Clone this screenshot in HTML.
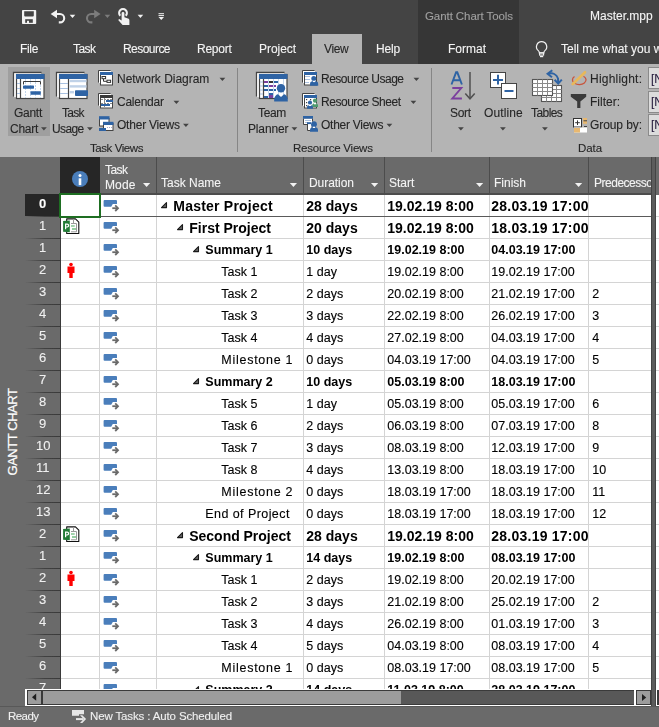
<!DOCTYPE html>
<html><head><meta charset="utf-8"><style>
html,body{margin:0;padding:0;}
body{width:659px;height:727px;position:relative;overflow:hidden;background:#444;font-family:"Liberation Sans",sans-serif;}
div,span{position:absolute;}
.t{white-space:nowrap;line-height:1;}
.g{will-change:transform;-webkit-text-stroke:0.1px currentColor;}
</style></head><body>
<div style="left:0px;top:0px;width:659px;height:64px;background:#444444;"></div>
<div style="left:418px;top:0px;width:101px;height:64px;background:#363636;"></div>
<span class="t g" style="left:425.30px;top:11px;font-size:11.5px;color:#a0a0a0;letter-spacing:-0.075px;">Gantt Chart Tools</span>
<span class="t g" style="left:590.30px;top:10px;font-size:12px;color:#f4f4f4;letter-spacing:-0.009px;">Master.mpp</span>
<div style="left:312px;top:34px;width:50px;height:30px;background:#b4b4b4;"></div>
<span class="t g" style="left:19.80px;top:43px;font-size:12px;color:#f4f4f4;letter-spacing:-0.334px;">File</span>
<span class="t g" style="left:72.80px;top:43px;font-size:12px;color:#f4f4f4;letter-spacing:-0.543px;">Task</span>
<span class="t g" style="left:122.80px;top:43px;font-size:12px;color:#f4f4f4;letter-spacing:-0.545px;">Resource</span>
<span class="t g" style="left:197.30px;top:43px;font-size:12px;color:#f4f4f4;letter-spacing:-0.253px;">Report</span>
<span class="t g" style="left:258.80px;top:43px;font-size:12px;color:#f4f4f4;letter-spacing:-0.050px;">Project</span>
<span class="t g" style="left:375.80px;top:43px;font-size:12px;color:#f4f4f4;letter-spacing:-0.170px;">Help</span>
<span class="t g" style="left:448.30px;top:43px;font-size:12px;color:#f4f4f4;letter-spacing:-0.001px;">Format</span>
<span class="t g" style="left:323.90px;top:43px;font-size:12px;color:#262626;letter-spacing:-0.398px;">View</span>
<span class="t g" style="left:561.30px;top:43px;font-size:12px;color:#f4f4f4;">Tell me what you want to do</span>
<div style="left:0px;top:64px;width:659px;height:93px;background:#b4b4b4;"></div>
<div style="left:8px;top:67px;width:42px;height:69px;background:#9f9f9f;"></div>
<div style="left:237px;top:68px;width:1px;height:84px;background:#868686;"></div>
<div style="left:431px;top:68px;width:1px;height:84px;background:#868686;"></div>
<span class="t g" style="left:14.30px;top:107px;font-size:12px;color:#262626;letter-spacing:-0.270px;">Gantt</span>
<span class="t g" style="left:10.30px;top:123px;font-size:12px;color:#262626;letter-spacing:-0.269px;">Chart</span>
<span class="t g" style="left:61.80px;top:107px;font-size:12px;color:#262626;letter-spacing:-0.743px;">Task</span>
<span class="t g" style="left:51.80px;top:123px;font-size:12px;color:#262626;letter-spacing:-0.638px;">Usage</span>
<span class="t g" style="left:116.80px;top:73px;font-size:12px;color:#262626;letter-spacing:-0.026px;">Network Diagram</span>
<span class="t g" style="left:116.80px;top:96px;font-size:12px;color:#262626;letter-spacing:-0.250px;">Calendar</span>
<span class="t g" style="left:116.80px;top:119px;font-size:12px;color:#262626;letter-spacing:-0.222px;">Other Views</span>
<span class="t g" style="left:90.30px;top:143px;font-size:11.5px;color:#262626;letter-spacing:-0.431px;">Task Views</span>
<span class="t g" style="left:258.00px;top:107px;font-size:12px;color:#262626;letter-spacing:-0.336px;">Team</span>
<span class="t g" style="left:248.00px;top:123px;font-size:12px;color:#262626;letter-spacing:-0.152px;">Planner</span>
<span class="t g" style="left:320.80px;top:73px;font-size:12px;color:#262626;letter-spacing:-0.491px;">Resource Usage</span>
<span class="t g" style="left:320.80px;top:96px;font-size:12px;color:#262626;letter-spacing:-0.468px;">Resource Sheet</span>
<span class="t g" style="left:320.80px;top:119px;font-size:12px;color:#262626;letter-spacing:-0.267px;">Other Views</span>
<span class="t g" style="left:293.30px;top:143px;font-size:11.5px;color:#262626;letter-spacing:-0.227px;">Resource Views</span>
<span class="t g" style="left:449.60px;top:107px;font-size:12px;color:#262626;letter-spacing:-0.302px;">Sort</span>
<span class="t g" style="left:483.80px;top:107px;font-size:12px;color:#262626;letter-spacing:0.097px;">Outline</span>
<span class="t g" style="left:530.90px;top:107px;font-size:12px;color:#262626;letter-spacing:-0.565px;">Tables</span>
<span class="t g" style="left:589.60px;top:73px;font-size:12px;color:#262626;letter-spacing:0.217px;">Highlight:</span>
<span class="t g" style="left:589.60px;top:96px;font-size:12px;color:#262626;letter-spacing:-0.000px;">Filter:</span>
<span class="t g" style="left:589.60px;top:119px;font-size:12px;color:#262626;letter-spacing:-0.077px;">Group by:</span>
<div style="left:648px;top:67px;width:20px;height:22px;background:#dcdcdc;border:1px solid #8a8a8a;box-sizing:border-box;"></div>
<div style="left:648px;top:91px;width:20px;height:22px;background:#dcdcdc;border:1px solid #8a8a8a;box-sizing:border-box;"></div>
<div style="left:648px;top:114px;width:20px;height:22px;background:#dcdcdc;border:1px solid #8a8a8a;box-sizing:border-box;"></div>
<span class="t g" style="left:651.30px;top:73px;font-size:12px;color:#2a2040;">[No</span>
<span class="t g" style="left:651.30px;top:96px;font-size:12px;color:#2a2040;">[No</span>
<span class="t g" style="left:651.30px;top:119px;font-size:12px;color:#2a2040;">[No</span>
<span class="t g" style="left:578.00px;top:143px;font-size:11.5px;color:#262626;letter-spacing:-0.073px;">Data</span>
<div style="left:0px;top:157px;width:659px;height:549px;background:#6a6a6a;"></div>
<div class="t" style="left:-39px;top:425px;width:104px;height:14px;line-height:14px;text-align:center;font-size:13px;color:#ffffff;transform:rotate(-90deg);letter-spacing:-0.45px;-webkit-text-stroke:0.2px #fff">GANTT CHART</div>
<div style="left:60px;top:157px;width:40px;height:36px;background:#262626;"></div>
<div style="left:156px;top:157px;width:1px;height:36px;background:#4c4c4c;"></div>
<div style="left:303px;top:157px;width:1px;height:36px;background:#4c4c4c;"></div>
<div style="left:384px;top:157px;width:1px;height:36px;background:#4c4c4c;"></div>
<div style="left:489px;top:157px;width:1px;height:36px;background:#4c4c4c;"></div>
<div style="left:588px;top:157px;width:1px;height:36px;background:#4c4c4c;"></div>
<div style="left:100px;top:193px;width:551px;height:2px;background:#4c4c4c;"></div>
<span class="t g" style="left:105.30px;top:164px;font-size:12px;color:#f4f4f4;letter-spacing:-0.543px;">Task</span>
<span class="t g" style="left:105.30px;top:179px;font-size:12px;color:#f4f4f4;letter-spacing:0.121px;">Mode</span>
<span class="t g" style="left:161.30px;top:177px;font-size:12px;color:#f4f4f4;">Task Name</span>
<span class="t g" style="left:309.00px;top:177px;font-size:12px;color:#f4f4f4;letter-spacing:-0.045px;">Duration</span>
<span class="t g" style="left:389.30px;top:177px;font-size:12px;color:#f4f4f4;">Start</span>
<span class="t g" style="left:494.30px;top:177px;font-size:12px;color:#f4f4f4;">Finish</span>
<div style="left:589px;top:157px;width:62px;height:36px;overflow:hidden">
<span class="t g" style="left:4.90px;top:20px;font-size:12px;color:#f4f4f4;letter-spacing:-0.489px;">Predecessors</span>
</div>
<div style="left:61px;top:195px;width:590px;height:494px;background:#ffffff;"></div>
<div style="left:656px;top:195px;width:3px;height:494px;background:#ffffff;"></div>
<div style="left:60px;top:195px;width:1px;height:494px;background:#3a3a3a;"></div>
<div style="left:0;top:0;width:659px;height:689px;overflow:hidden">
<div style="left:61px;top:216px;width:590px;height:1px;background:#5a5a5a;"></div>
<div style="left:656px;top:216px;width:3px;height:1px;background:#d4d4d4;"></div>
<div style="left:156px;top:195px;width:1px;height:21px;background:#d4d4d4;"></div>
<div style="left:303px;top:195px;width:1px;height:21px;background:#d4d4d4;"></div>
<div style="left:384px;top:195px;width:1px;height:21px;background:#d4d4d4;"></div>
<div style="left:489px;top:195px;width:1px;height:21px;background:#d4d4d4;"></div>
<div style="left:588px;top:195px;width:1px;height:21px;background:#d4d4d4;"></div>
<div style="left:99px;top:195px;width:1px;height:21px;background:#d4d4d4;"></div>
<div style="left:25px;top:216px;width:35px;height:1px;background:linear-gradient(90deg, rgba(58,58,58,0) 0%, rgba(58,58,58,0.85) 55%, #3a3a3a 100%)"></div>
<div style="left:25px;top:194px;width:34px;height:22px;background:#262626;"></div>
<span class="t g" style="left:38.88px;top:197px;font-size:13px;color:#ffffff;font-weight:bold;">0</span>
<span class="t" style="left:173.30px;top:199px;font-size:14px;color:#000000;font-weight:bold;letter-spacing:0.216px;">Master Project</span>
<span class="t" style="left:306.30px;top:199px;font-size:14px;color:#000000;font-weight:bold;">28 days</span>
<span class="t" style="left:387.30px;top:199px;font-size:14px;color:#000000;font-weight:bold;">19.02.19 8:00</span>
<div style="left:489px;top:194px;width:99px;height:22px;overflow:hidden">
<span class="t" style="left:2.30px;top:5px;font-size:14px;color:#000000;font-weight:bold;letter-spacing:0.236px;">28.03.19 17:00</span>
</div>
<div style="left:61px;top:238px;width:590px;height:1px;background:#d4d4d4;"></div>
<div style="left:656px;top:238px;width:3px;height:1px;background:#d4d4d4;"></div>
<div style="left:156px;top:217px;width:1px;height:21px;background:#d4d4d4;"></div>
<div style="left:303px;top:217px;width:1px;height:21px;background:#d4d4d4;"></div>
<div style="left:384px;top:217px;width:1px;height:21px;background:#d4d4d4;"></div>
<div style="left:489px;top:217px;width:1px;height:21px;background:#d4d4d4;"></div>
<div style="left:588px;top:217px;width:1px;height:21px;background:#d4d4d4;"></div>
<div style="left:99px;top:217px;width:1px;height:21px;background:#d4d4d4;"></div>
<div style="left:25px;top:238px;width:35px;height:1px;background:linear-gradient(90deg, rgba(58,58,58,0) 0%, rgba(58,58,58,0.85) 55%, #3a3a3a 100%)"></div>
<span class="t g" style="left:39.18px;top:219px;font-size:13px;color:#f0f0f0;">1</span>
<span class="t" style="left:189.30px;top:221px;font-size:14px;color:#000000;font-weight:bold;">First Project</span>
<span class="t" style="left:306.30px;top:221px;font-size:14px;color:#000000;font-weight:bold;">20 days</span>
<span class="t" style="left:387.30px;top:221px;font-size:14px;color:#000000;font-weight:bold;">19.02.19 8:00</span>
<div style="left:489px;top:216px;width:99px;height:22px;overflow:hidden">
<span class="t" style="left:2.30px;top:5px;font-size:14px;color:#000000;font-weight:bold;letter-spacing:0.236px;">18.03.19 17:00</span>
</div>
<div style="left:61px;top:260px;width:590px;height:1px;background:#d4d4d4;"></div>
<div style="left:656px;top:260px;width:3px;height:1px;background:#d4d4d4;"></div>
<div style="left:156px;top:239px;width:1px;height:21px;background:#d4d4d4;"></div>
<div style="left:303px;top:239px;width:1px;height:21px;background:#d4d4d4;"></div>
<div style="left:384px;top:239px;width:1px;height:21px;background:#d4d4d4;"></div>
<div style="left:489px;top:239px;width:1px;height:21px;background:#d4d4d4;"></div>
<div style="left:588px;top:239px;width:1px;height:21px;background:#d4d4d4;"></div>
<div style="left:99px;top:239px;width:1px;height:21px;background:#d4d4d4;"></div>
<div style="left:25px;top:260px;width:35px;height:1px;background:linear-gradient(90deg, rgba(58,58,58,0) 0%, rgba(58,58,58,0.85) 55%, #3a3a3a 100%)"></div>
<span class="t g" style="left:39.18px;top:241px;font-size:13px;color:#f0f0f0;">1</span>
<span class="t" style="left:205.30px;top:244px;font-size:12.5px;color:#000000;font-weight:bold;">Summary 1</span>
<span class="t" style="left:306.30px;top:244px;font-size:12.5px;color:#000000;font-weight:bold;">10 days</span>
<span class="t" style="left:387.30px;top:244px;font-size:12.5px;color:#000000;font-weight:bold;">19.02.19 8:00</span>
<div style="left:489px;top:238px;width:99px;height:22px;overflow:hidden">
<span class="t" style="left:2.30px;top:6px;font-size:12.5px;color:#000000;font-weight:bold;">04.03.19 17:00</span>
</div>
<div style="left:61px;top:282px;width:590px;height:1px;background:#d4d4d4;"></div>
<div style="left:656px;top:282px;width:3px;height:1px;background:#d4d4d4;"></div>
<div style="left:156px;top:261px;width:1px;height:21px;background:#d4d4d4;"></div>
<div style="left:303px;top:261px;width:1px;height:21px;background:#d4d4d4;"></div>
<div style="left:384px;top:261px;width:1px;height:21px;background:#d4d4d4;"></div>
<div style="left:489px;top:261px;width:1px;height:21px;background:#d4d4d4;"></div>
<div style="left:588px;top:261px;width:1px;height:21px;background:#d4d4d4;"></div>
<div style="left:99px;top:261px;width:1px;height:21px;background:#d4d4d4;"></div>
<div style="left:25px;top:282px;width:35px;height:1px;background:linear-gradient(90deg, rgba(58,58,58,0) 0%, rgba(58,58,58,0.85) 55%, #3a3a3a 100%)"></div>
<span class="t g" style="left:39.18px;top:263px;font-size:13px;color:#f0f0f0;">2</span>
<span class="t" style="left:221.30px;top:266px;font-size:12.5px;color:#000000;-webkit-text-stroke:0.12px #000;">Task 1</span>
<span class="t" style="left:306.30px;top:266px;font-size:12.5px;color:#000000;-webkit-text-stroke:0.12px #000;">1 day</span>
<span class="t" style="left:387.30px;top:266px;font-size:12.5px;color:#000000;-webkit-text-stroke:0.12px #000;">19.02.19 8:00</span>
<div style="left:489px;top:260px;width:99px;height:22px;overflow:hidden">
<span class="t" style="left:2.30px;top:6px;font-size:12.5px;color:#000000;-webkit-text-stroke:0.12px #000;">19.02.19 17:00</span>
</div>
<div style="left:61px;top:304px;width:590px;height:1px;background:#d4d4d4;"></div>
<div style="left:656px;top:304px;width:3px;height:1px;background:#d4d4d4;"></div>
<div style="left:156px;top:283px;width:1px;height:21px;background:#d4d4d4;"></div>
<div style="left:303px;top:283px;width:1px;height:21px;background:#d4d4d4;"></div>
<div style="left:384px;top:283px;width:1px;height:21px;background:#d4d4d4;"></div>
<div style="left:489px;top:283px;width:1px;height:21px;background:#d4d4d4;"></div>
<div style="left:588px;top:283px;width:1px;height:21px;background:#d4d4d4;"></div>
<div style="left:99px;top:283px;width:1px;height:21px;background:#d4d4d4;"></div>
<div style="left:25px;top:304px;width:35px;height:1px;background:linear-gradient(90deg, rgba(58,58,58,0) 0%, rgba(58,58,58,0.85) 55%, #3a3a3a 100%)"></div>
<span class="t g" style="left:39.18px;top:285px;font-size:13px;color:#f0f0f0;">3</span>
<span class="t" style="left:221.30px;top:288px;font-size:12.5px;color:#000000;-webkit-text-stroke:0.12px #000;">Task 2</span>
<span class="t" style="left:306.30px;top:288px;font-size:12.5px;color:#000000;-webkit-text-stroke:0.12px #000;">2 days</span>
<span class="t" style="left:387.30px;top:288px;font-size:12.5px;color:#000000;-webkit-text-stroke:0.12px #000;">20.02.19 8:00</span>
<div style="left:489px;top:282px;width:99px;height:22px;overflow:hidden">
<span class="t" style="left:2.30px;top:6px;font-size:12.5px;color:#000000;-webkit-text-stroke:0.12px #000;">21.02.19 17:00</span>
</div>
<span class="t" style="left:592.30px;top:288px;font-size:12.5px;color:#000000;-webkit-text-stroke:0.12px #000;">2</span>
<div style="left:61px;top:326px;width:590px;height:1px;background:#d4d4d4;"></div>
<div style="left:656px;top:326px;width:3px;height:1px;background:#d4d4d4;"></div>
<div style="left:156px;top:305px;width:1px;height:21px;background:#d4d4d4;"></div>
<div style="left:303px;top:305px;width:1px;height:21px;background:#d4d4d4;"></div>
<div style="left:384px;top:305px;width:1px;height:21px;background:#d4d4d4;"></div>
<div style="left:489px;top:305px;width:1px;height:21px;background:#d4d4d4;"></div>
<div style="left:588px;top:305px;width:1px;height:21px;background:#d4d4d4;"></div>
<div style="left:99px;top:305px;width:1px;height:21px;background:#d4d4d4;"></div>
<div style="left:25px;top:326px;width:35px;height:1px;background:linear-gradient(90deg, rgba(58,58,58,0) 0%, rgba(58,58,58,0.85) 55%, #3a3a3a 100%)"></div>
<span class="t g" style="left:39.18px;top:307px;font-size:13px;color:#f0f0f0;">4</span>
<span class="t" style="left:221.30px;top:310px;font-size:12.5px;color:#000000;-webkit-text-stroke:0.12px #000;">Task 3</span>
<span class="t" style="left:306.30px;top:310px;font-size:12.5px;color:#000000;-webkit-text-stroke:0.12px #000;">3 days</span>
<span class="t" style="left:387.30px;top:310px;font-size:12.5px;color:#000000;-webkit-text-stroke:0.12px #000;">22.02.19 8:00</span>
<div style="left:489px;top:304px;width:99px;height:22px;overflow:hidden">
<span class="t" style="left:2.30px;top:6px;font-size:12.5px;color:#000000;-webkit-text-stroke:0.12px #000;">26.02.19 17:00</span>
</div>
<span class="t" style="left:592.30px;top:310px;font-size:12.5px;color:#000000;-webkit-text-stroke:0.12px #000;">3</span>
<div style="left:61px;top:348px;width:590px;height:1px;background:#d4d4d4;"></div>
<div style="left:656px;top:348px;width:3px;height:1px;background:#d4d4d4;"></div>
<div style="left:156px;top:327px;width:1px;height:21px;background:#d4d4d4;"></div>
<div style="left:303px;top:327px;width:1px;height:21px;background:#d4d4d4;"></div>
<div style="left:384px;top:327px;width:1px;height:21px;background:#d4d4d4;"></div>
<div style="left:489px;top:327px;width:1px;height:21px;background:#d4d4d4;"></div>
<div style="left:588px;top:327px;width:1px;height:21px;background:#d4d4d4;"></div>
<div style="left:99px;top:327px;width:1px;height:21px;background:#d4d4d4;"></div>
<div style="left:25px;top:348px;width:35px;height:1px;background:linear-gradient(90deg, rgba(58,58,58,0) 0%, rgba(58,58,58,0.85) 55%, #3a3a3a 100%)"></div>
<span class="t g" style="left:39.18px;top:329px;font-size:13px;color:#f0f0f0;">5</span>
<span class="t" style="left:221.30px;top:332px;font-size:12.5px;color:#000000;-webkit-text-stroke:0.12px #000;">Task 4</span>
<span class="t" style="left:306.30px;top:332px;font-size:12.5px;color:#000000;-webkit-text-stroke:0.12px #000;">4 days</span>
<span class="t" style="left:387.30px;top:332px;font-size:12.5px;color:#000000;-webkit-text-stroke:0.12px #000;">27.02.19 8:00</span>
<div style="left:489px;top:326px;width:99px;height:22px;overflow:hidden">
<span class="t" style="left:2.30px;top:6px;font-size:12.5px;color:#000000;-webkit-text-stroke:0.12px #000;">04.03.19 17:00</span>
</div>
<span class="t" style="left:592.30px;top:332px;font-size:12.5px;color:#000000;-webkit-text-stroke:0.12px #000;">4</span>
<div style="left:61px;top:370px;width:590px;height:1px;background:#d4d4d4;"></div>
<div style="left:656px;top:370px;width:3px;height:1px;background:#d4d4d4;"></div>
<div style="left:156px;top:349px;width:1px;height:21px;background:#d4d4d4;"></div>
<div style="left:303px;top:349px;width:1px;height:21px;background:#d4d4d4;"></div>
<div style="left:384px;top:349px;width:1px;height:21px;background:#d4d4d4;"></div>
<div style="left:489px;top:349px;width:1px;height:21px;background:#d4d4d4;"></div>
<div style="left:588px;top:349px;width:1px;height:21px;background:#d4d4d4;"></div>
<div style="left:99px;top:349px;width:1px;height:21px;background:#d4d4d4;"></div>
<div style="left:25px;top:370px;width:35px;height:1px;background:linear-gradient(90deg, rgba(58,58,58,0) 0%, rgba(58,58,58,0.85) 55%, #3a3a3a 100%)"></div>
<span class="t g" style="left:39.18px;top:351px;font-size:13px;color:#f0f0f0;">6</span>
<span class="t" style="left:221.30px;top:354px;font-size:12.5px;color:#000000;letter-spacing:0.734px;-webkit-text-stroke:0.12px #000;">Milestone 1</span>
<span class="t" style="left:306.30px;top:354px;font-size:12.5px;color:#000000;-webkit-text-stroke:0.12px #000;">0 days</span>
<span class="t" style="left:387.30px;top:354px;font-size:12.5px;color:#000000;-webkit-text-stroke:0.12px #000;">04.03.19 17:00</span>
<div style="left:489px;top:348px;width:99px;height:22px;overflow:hidden">
<span class="t" style="left:2.30px;top:6px;font-size:12.5px;color:#000000;-webkit-text-stroke:0.12px #000;">04.03.19 17:00</span>
</div>
<span class="t" style="left:592.30px;top:354px;font-size:12.5px;color:#000000;-webkit-text-stroke:0.12px #000;">5</span>
<div style="left:61px;top:392px;width:590px;height:1px;background:#d4d4d4;"></div>
<div style="left:656px;top:392px;width:3px;height:1px;background:#d4d4d4;"></div>
<div style="left:156px;top:371px;width:1px;height:21px;background:#d4d4d4;"></div>
<div style="left:303px;top:371px;width:1px;height:21px;background:#d4d4d4;"></div>
<div style="left:384px;top:371px;width:1px;height:21px;background:#d4d4d4;"></div>
<div style="left:489px;top:371px;width:1px;height:21px;background:#d4d4d4;"></div>
<div style="left:588px;top:371px;width:1px;height:21px;background:#d4d4d4;"></div>
<div style="left:99px;top:371px;width:1px;height:21px;background:#d4d4d4;"></div>
<div style="left:25px;top:392px;width:35px;height:1px;background:linear-gradient(90deg, rgba(58,58,58,0) 0%, rgba(58,58,58,0.85) 55%, #3a3a3a 100%)"></div>
<span class="t g" style="left:39.18px;top:373px;font-size:13px;color:#f0f0f0;">7</span>
<span class="t" style="left:205.30px;top:376px;font-size:12.5px;color:#000000;font-weight:bold;">Summary 2</span>
<span class="t" style="left:306.30px;top:376px;font-size:12.5px;color:#000000;font-weight:bold;">10 days</span>
<span class="t" style="left:387.30px;top:376px;font-size:12.5px;color:#000000;font-weight:bold;">05.03.19 8:00</span>
<div style="left:489px;top:370px;width:99px;height:22px;overflow:hidden">
<span class="t" style="left:2.30px;top:6px;font-size:12.5px;color:#000000;font-weight:bold;">18.03.19 17:00</span>
</div>
<div style="left:61px;top:414px;width:590px;height:1px;background:#d4d4d4;"></div>
<div style="left:656px;top:414px;width:3px;height:1px;background:#d4d4d4;"></div>
<div style="left:156px;top:393px;width:1px;height:21px;background:#d4d4d4;"></div>
<div style="left:303px;top:393px;width:1px;height:21px;background:#d4d4d4;"></div>
<div style="left:384px;top:393px;width:1px;height:21px;background:#d4d4d4;"></div>
<div style="left:489px;top:393px;width:1px;height:21px;background:#d4d4d4;"></div>
<div style="left:588px;top:393px;width:1px;height:21px;background:#d4d4d4;"></div>
<div style="left:99px;top:393px;width:1px;height:21px;background:#d4d4d4;"></div>
<div style="left:25px;top:414px;width:35px;height:1px;background:linear-gradient(90deg, rgba(58,58,58,0) 0%, rgba(58,58,58,0.85) 55%, #3a3a3a 100%)"></div>
<span class="t g" style="left:39.18px;top:395px;font-size:13px;color:#f0f0f0;">8</span>
<span class="t" style="left:221.30px;top:398px;font-size:12.5px;color:#000000;-webkit-text-stroke:0.12px #000;">Task 5</span>
<span class="t" style="left:306.30px;top:398px;font-size:12.5px;color:#000000;-webkit-text-stroke:0.12px #000;">1 day</span>
<span class="t" style="left:387.30px;top:398px;font-size:12.5px;color:#000000;-webkit-text-stroke:0.12px #000;">05.03.19 8:00</span>
<div style="left:489px;top:392px;width:99px;height:22px;overflow:hidden">
<span class="t" style="left:2.30px;top:6px;font-size:12.5px;color:#000000;-webkit-text-stroke:0.12px #000;">05.03.19 17:00</span>
</div>
<span class="t" style="left:592.30px;top:398px;font-size:12.5px;color:#000000;-webkit-text-stroke:0.12px #000;">6</span>
<div style="left:61px;top:436px;width:590px;height:1px;background:#d4d4d4;"></div>
<div style="left:656px;top:436px;width:3px;height:1px;background:#d4d4d4;"></div>
<div style="left:156px;top:415px;width:1px;height:21px;background:#d4d4d4;"></div>
<div style="left:303px;top:415px;width:1px;height:21px;background:#d4d4d4;"></div>
<div style="left:384px;top:415px;width:1px;height:21px;background:#d4d4d4;"></div>
<div style="left:489px;top:415px;width:1px;height:21px;background:#d4d4d4;"></div>
<div style="left:588px;top:415px;width:1px;height:21px;background:#d4d4d4;"></div>
<div style="left:99px;top:415px;width:1px;height:21px;background:#d4d4d4;"></div>
<div style="left:25px;top:436px;width:35px;height:1px;background:linear-gradient(90deg, rgba(58,58,58,0) 0%, rgba(58,58,58,0.85) 55%, #3a3a3a 100%)"></div>
<span class="t g" style="left:39.18px;top:417px;font-size:13px;color:#f0f0f0;">9</span>
<span class="t" style="left:221.30px;top:420px;font-size:12.5px;color:#000000;-webkit-text-stroke:0.12px #000;">Task 6</span>
<span class="t" style="left:306.30px;top:420px;font-size:12.5px;color:#000000;-webkit-text-stroke:0.12px #000;">2 days</span>
<span class="t" style="left:387.30px;top:420px;font-size:12.5px;color:#000000;-webkit-text-stroke:0.12px #000;">06.03.19 8:00</span>
<div style="left:489px;top:414px;width:99px;height:22px;overflow:hidden">
<span class="t" style="left:2.30px;top:6px;font-size:12.5px;color:#000000;-webkit-text-stroke:0.12px #000;">07.03.19 17:00</span>
</div>
<span class="t" style="left:592.30px;top:420px;font-size:12.5px;color:#000000;-webkit-text-stroke:0.12px #000;">8</span>
<div style="left:61px;top:458px;width:590px;height:1px;background:#d4d4d4;"></div>
<div style="left:656px;top:458px;width:3px;height:1px;background:#d4d4d4;"></div>
<div style="left:156px;top:437px;width:1px;height:21px;background:#d4d4d4;"></div>
<div style="left:303px;top:437px;width:1px;height:21px;background:#d4d4d4;"></div>
<div style="left:384px;top:437px;width:1px;height:21px;background:#d4d4d4;"></div>
<div style="left:489px;top:437px;width:1px;height:21px;background:#d4d4d4;"></div>
<div style="left:588px;top:437px;width:1px;height:21px;background:#d4d4d4;"></div>
<div style="left:99px;top:437px;width:1px;height:21px;background:#d4d4d4;"></div>
<div style="left:25px;top:458px;width:35px;height:1px;background:linear-gradient(90deg, rgba(58,58,58,0) 0%, rgba(58,58,58,0.85) 55%, #3a3a3a 100%)"></div>
<span class="t g" style="left:35.57px;top:439px;font-size:13px;color:#f0f0f0;">10</span>
<span class="t" style="left:221.30px;top:442px;font-size:12.5px;color:#000000;-webkit-text-stroke:0.12px #000;">Task 7</span>
<span class="t" style="left:306.30px;top:442px;font-size:12.5px;color:#000000;-webkit-text-stroke:0.12px #000;">3 days</span>
<span class="t" style="left:387.30px;top:442px;font-size:12.5px;color:#000000;-webkit-text-stroke:0.12px #000;">08.03.19 8:00</span>
<div style="left:489px;top:436px;width:99px;height:22px;overflow:hidden">
<span class="t" style="left:2.30px;top:6px;font-size:12.5px;color:#000000;-webkit-text-stroke:0.12px #000;">12.03.19 17:00</span>
</div>
<span class="t" style="left:592.30px;top:442px;font-size:12.5px;color:#000000;-webkit-text-stroke:0.12px #000;">9</span>
<div style="left:61px;top:480px;width:590px;height:1px;background:#d4d4d4;"></div>
<div style="left:656px;top:480px;width:3px;height:1px;background:#d4d4d4;"></div>
<div style="left:156px;top:459px;width:1px;height:21px;background:#d4d4d4;"></div>
<div style="left:303px;top:459px;width:1px;height:21px;background:#d4d4d4;"></div>
<div style="left:384px;top:459px;width:1px;height:21px;background:#d4d4d4;"></div>
<div style="left:489px;top:459px;width:1px;height:21px;background:#d4d4d4;"></div>
<div style="left:588px;top:459px;width:1px;height:21px;background:#d4d4d4;"></div>
<div style="left:99px;top:459px;width:1px;height:21px;background:#d4d4d4;"></div>
<div style="left:25px;top:480px;width:35px;height:1px;background:linear-gradient(90deg, rgba(58,58,58,0) 0%, rgba(58,58,58,0.85) 55%, #3a3a3a 100%)"></div>
<span class="t g" style="left:36.05px;top:461px;font-size:13px;color:#f0f0f0;">11</span>
<span class="t" style="left:221.30px;top:464px;font-size:12.5px;color:#000000;-webkit-text-stroke:0.12px #000;">Task 8</span>
<span class="t" style="left:306.30px;top:464px;font-size:12.5px;color:#000000;-webkit-text-stroke:0.12px #000;">4 days</span>
<span class="t" style="left:387.30px;top:464px;font-size:12.5px;color:#000000;-webkit-text-stroke:0.12px #000;">13.03.19 8:00</span>
<div style="left:489px;top:458px;width:99px;height:22px;overflow:hidden">
<span class="t" style="left:2.30px;top:6px;font-size:12.5px;color:#000000;-webkit-text-stroke:0.12px #000;">18.03.19 17:00</span>
</div>
<span class="t" style="left:592.30px;top:464px;font-size:12.5px;color:#000000;-webkit-text-stroke:0.12px #000;">10</span>
<div style="left:61px;top:502px;width:590px;height:1px;background:#d4d4d4;"></div>
<div style="left:656px;top:502px;width:3px;height:1px;background:#d4d4d4;"></div>
<div style="left:156px;top:481px;width:1px;height:21px;background:#d4d4d4;"></div>
<div style="left:303px;top:481px;width:1px;height:21px;background:#d4d4d4;"></div>
<div style="left:384px;top:481px;width:1px;height:21px;background:#d4d4d4;"></div>
<div style="left:489px;top:481px;width:1px;height:21px;background:#d4d4d4;"></div>
<div style="left:588px;top:481px;width:1px;height:21px;background:#d4d4d4;"></div>
<div style="left:99px;top:481px;width:1px;height:21px;background:#d4d4d4;"></div>
<div style="left:25px;top:502px;width:35px;height:1px;background:linear-gradient(90deg, rgba(58,58,58,0) 0%, rgba(58,58,58,0.85) 55%, #3a3a3a 100%)"></div>
<span class="t g" style="left:35.57px;top:483px;font-size:13px;color:#f0f0f0;">12</span>
<span class="t" style="left:221.30px;top:486px;font-size:12.5px;color:#000000;letter-spacing:0.734px;-webkit-text-stroke:0.12px #000;">Milestone 2</span>
<span class="t" style="left:306.30px;top:486px;font-size:12.5px;color:#000000;-webkit-text-stroke:0.12px #000;">0 days</span>
<span class="t" style="left:387.30px;top:486px;font-size:12.5px;color:#000000;-webkit-text-stroke:0.12px #000;">18.03.19 17:00</span>
<div style="left:489px;top:480px;width:99px;height:22px;overflow:hidden">
<span class="t" style="left:2.30px;top:6px;font-size:12.5px;color:#000000;-webkit-text-stroke:0.12px #000;">18.03.19 17:00</span>
</div>
<span class="t" style="left:592.30px;top:486px;font-size:12.5px;color:#000000;-webkit-text-stroke:0.12px #000;">11</span>
<div style="left:61px;top:524px;width:590px;height:1px;background:#d4d4d4;"></div>
<div style="left:656px;top:524px;width:3px;height:1px;background:#d4d4d4;"></div>
<div style="left:156px;top:503px;width:1px;height:21px;background:#d4d4d4;"></div>
<div style="left:303px;top:503px;width:1px;height:21px;background:#d4d4d4;"></div>
<div style="left:384px;top:503px;width:1px;height:21px;background:#d4d4d4;"></div>
<div style="left:489px;top:503px;width:1px;height:21px;background:#d4d4d4;"></div>
<div style="left:588px;top:503px;width:1px;height:21px;background:#d4d4d4;"></div>
<div style="left:99px;top:503px;width:1px;height:21px;background:#d4d4d4;"></div>
<div style="left:25px;top:524px;width:35px;height:1px;background:linear-gradient(90deg, rgba(58,58,58,0) 0%, rgba(58,58,58,0.85) 55%, #3a3a3a 100%)"></div>
<span class="t g" style="left:35.57px;top:505px;font-size:13px;color:#f0f0f0;">13</span>
<span class="t" style="left:205.30px;top:508px;font-size:12.5px;color:#000000;letter-spacing:0.427px;-webkit-text-stroke:0.12px #000;">End of Project</span>
<span class="t" style="left:306.30px;top:508px;font-size:12.5px;color:#000000;-webkit-text-stroke:0.12px #000;">0 days</span>
<span class="t" style="left:387.30px;top:508px;font-size:12.5px;color:#000000;-webkit-text-stroke:0.12px #000;">18.03.19 17:00</span>
<div style="left:489px;top:502px;width:99px;height:22px;overflow:hidden">
<span class="t" style="left:2.30px;top:6px;font-size:12.5px;color:#000000;-webkit-text-stroke:0.12px #000;">18.03.19 17:00</span>
</div>
<span class="t" style="left:592.30px;top:508px;font-size:12.5px;color:#000000;-webkit-text-stroke:0.12px #000;">12</span>
<div style="left:61px;top:546px;width:590px;height:1px;background:#d4d4d4;"></div>
<div style="left:656px;top:546px;width:3px;height:1px;background:#d4d4d4;"></div>
<div style="left:156px;top:525px;width:1px;height:21px;background:#d4d4d4;"></div>
<div style="left:303px;top:525px;width:1px;height:21px;background:#d4d4d4;"></div>
<div style="left:384px;top:525px;width:1px;height:21px;background:#d4d4d4;"></div>
<div style="left:489px;top:525px;width:1px;height:21px;background:#d4d4d4;"></div>
<div style="left:588px;top:525px;width:1px;height:21px;background:#d4d4d4;"></div>
<div style="left:99px;top:525px;width:1px;height:21px;background:#d4d4d4;"></div>
<div style="left:25px;top:546px;width:35px;height:1px;background:linear-gradient(90deg, rgba(58,58,58,0) 0%, rgba(58,58,58,0.85) 55%, #3a3a3a 100%)"></div>
<span class="t g" style="left:39.18px;top:527px;font-size:13px;color:#f0f0f0;">2</span>
<span class="t" style="left:189.30px;top:529px;font-size:14px;color:#000000;font-weight:bold;letter-spacing:-0.030px;">Second Project</span>
<span class="t" style="left:306.30px;top:529px;font-size:14px;color:#000000;font-weight:bold;">28 days</span>
<span class="t" style="left:387.30px;top:529px;font-size:14px;color:#000000;font-weight:bold;">19.02.19 8:00</span>
<div style="left:489px;top:524px;width:99px;height:22px;overflow:hidden">
<span class="t" style="left:2.30px;top:5px;font-size:14px;color:#000000;font-weight:bold;letter-spacing:0.236px;">28.03.19 17:00</span>
</div>
<div style="left:61px;top:568px;width:590px;height:1px;background:#d4d4d4;"></div>
<div style="left:656px;top:568px;width:3px;height:1px;background:#d4d4d4;"></div>
<div style="left:156px;top:547px;width:1px;height:21px;background:#d4d4d4;"></div>
<div style="left:303px;top:547px;width:1px;height:21px;background:#d4d4d4;"></div>
<div style="left:384px;top:547px;width:1px;height:21px;background:#d4d4d4;"></div>
<div style="left:489px;top:547px;width:1px;height:21px;background:#d4d4d4;"></div>
<div style="left:588px;top:547px;width:1px;height:21px;background:#d4d4d4;"></div>
<div style="left:99px;top:547px;width:1px;height:21px;background:#d4d4d4;"></div>
<div style="left:25px;top:568px;width:35px;height:1px;background:linear-gradient(90deg, rgba(58,58,58,0) 0%, rgba(58,58,58,0.85) 55%, #3a3a3a 100%)"></div>
<span class="t g" style="left:39.18px;top:549px;font-size:13px;color:#f0f0f0;">1</span>
<span class="t" style="left:205.30px;top:552px;font-size:12.5px;color:#000000;font-weight:bold;">Summary 1</span>
<span class="t" style="left:306.30px;top:552px;font-size:12.5px;color:#000000;font-weight:bold;">14 days</span>
<span class="t" style="left:387.30px;top:552px;font-size:12.5px;color:#000000;font-weight:bold;">19.02.19 8:00</span>
<div style="left:489px;top:546px;width:99px;height:22px;overflow:hidden">
<span class="t" style="left:2.30px;top:6px;font-size:12.5px;color:#000000;font-weight:bold;">08.03.19 17:00</span>
</div>
<div style="left:61px;top:590px;width:590px;height:1px;background:#d4d4d4;"></div>
<div style="left:656px;top:590px;width:3px;height:1px;background:#d4d4d4;"></div>
<div style="left:156px;top:569px;width:1px;height:21px;background:#d4d4d4;"></div>
<div style="left:303px;top:569px;width:1px;height:21px;background:#d4d4d4;"></div>
<div style="left:384px;top:569px;width:1px;height:21px;background:#d4d4d4;"></div>
<div style="left:489px;top:569px;width:1px;height:21px;background:#d4d4d4;"></div>
<div style="left:588px;top:569px;width:1px;height:21px;background:#d4d4d4;"></div>
<div style="left:99px;top:569px;width:1px;height:21px;background:#d4d4d4;"></div>
<div style="left:25px;top:590px;width:35px;height:1px;background:linear-gradient(90deg, rgba(58,58,58,0) 0%, rgba(58,58,58,0.85) 55%, #3a3a3a 100%)"></div>
<span class="t g" style="left:39.18px;top:571px;font-size:13px;color:#f0f0f0;">2</span>
<span class="t" style="left:221.30px;top:574px;font-size:12.5px;color:#000000;-webkit-text-stroke:0.12px #000;">Task 1</span>
<span class="t" style="left:306.30px;top:574px;font-size:12.5px;color:#000000;-webkit-text-stroke:0.12px #000;">2 days</span>
<span class="t" style="left:387.30px;top:574px;font-size:12.5px;color:#000000;-webkit-text-stroke:0.12px #000;">19.02.19 8:00</span>
<div style="left:489px;top:568px;width:99px;height:22px;overflow:hidden">
<span class="t" style="left:2.30px;top:6px;font-size:12.5px;color:#000000;-webkit-text-stroke:0.12px #000;">20.02.19 17:00</span>
</div>
<div style="left:61px;top:612px;width:590px;height:1px;background:#d4d4d4;"></div>
<div style="left:656px;top:612px;width:3px;height:1px;background:#d4d4d4;"></div>
<div style="left:156px;top:591px;width:1px;height:21px;background:#d4d4d4;"></div>
<div style="left:303px;top:591px;width:1px;height:21px;background:#d4d4d4;"></div>
<div style="left:384px;top:591px;width:1px;height:21px;background:#d4d4d4;"></div>
<div style="left:489px;top:591px;width:1px;height:21px;background:#d4d4d4;"></div>
<div style="left:588px;top:591px;width:1px;height:21px;background:#d4d4d4;"></div>
<div style="left:99px;top:591px;width:1px;height:21px;background:#d4d4d4;"></div>
<div style="left:25px;top:612px;width:35px;height:1px;background:linear-gradient(90deg, rgba(58,58,58,0) 0%, rgba(58,58,58,0.85) 55%, #3a3a3a 100%)"></div>
<span class="t g" style="left:39.18px;top:593px;font-size:13px;color:#f0f0f0;">3</span>
<span class="t" style="left:221.30px;top:596px;font-size:12.5px;color:#000000;-webkit-text-stroke:0.12px #000;">Task 2</span>
<span class="t" style="left:306.30px;top:596px;font-size:12.5px;color:#000000;-webkit-text-stroke:0.12px #000;">3 days</span>
<span class="t" style="left:387.30px;top:596px;font-size:12.5px;color:#000000;-webkit-text-stroke:0.12px #000;">21.02.19 8:00</span>
<div style="left:489px;top:590px;width:99px;height:22px;overflow:hidden">
<span class="t" style="left:2.30px;top:6px;font-size:12.5px;color:#000000;-webkit-text-stroke:0.12px #000;">25.02.19 17:00</span>
</div>
<span class="t" style="left:592.30px;top:596px;font-size:12.5px;color:#000000;-webkit-text-stroke:0.12px #000;">2</span>
<div style="left:61px;top:634px;width:590px;height:1px;background:#d4d4d4;"></div>
<div style="left:656px;top:634px;width:3px;height:1px;background:#d4d4d4;"></div>
<div style="left:156px;top:613px;width:1px;height:21px;background:#d4d4d4;"></div>
<div style="left:303px;top:613px;width:1px;height:21px;background:#d4d4d4;"></div>
<div style="left:384px;top:613px;width:1px;height:21px;background:#d4d4d4;"></div>
<div style="left:489px;top:613px;width:1px;height:21px;background:#d4d4d4;"></div>
<div style="left:588px;top:613px;width:1px;height:21px;background:#d4d4d4;"></div>
<div style="left:99px;top:613px;width:1px;height:21px;background:#d4d4d4;"></div>
<div style="left:25px;top:634px;width:35px;height:1px;background:linear-gradient(90deg, rgba(58,58,58,0) 0%, rgba(58,58,58,0.85) 55%, #3a3a3a 100%)"></div>
<span class="t g" style="left:39.18px;top:615px;font-size:13px;color:#f0f0f0;">4</span>
<span class="t" style="left:221.30px;top:618px;font-size:12.5px;color:#000000;-webkit-text-stroke:0.12px #000;">Task 3</span>
<span class="t" style="left:306.30px;top:618px;font-size:12.5px;color:#000000;-webkit-text-stroke:0.12px #000;">4 days</span>
<span class="t" style="left:387.30px;top:618px;font-size:12.5px;color:#000000;-webkit-text-stroke:0.12px #000;">26.02.19 8:00</span>
<div style="left:489px;top:612px;width:99px;height:22px;overflow:hidden">
<span class="t" style="left:2.30px;top:6px;font-size:12.5px;color:#000000;-webkit-text-stroke:0.12px #000;">01.03.19 17:00</span>
</div>
<span class="t" style="left:592.30px;top:618px;font-size:12.5px;color:#000000;-webkit-text-stroke:0.12px #000;">3</span>
<div style="left:61px;top:656px;width:590px;height:1px;background:#d4d4d4;"></div>
<div style="left:656px;top:656px;width:3px;height:1px;background:#d4d4d4;"></div>
<div style="left:156px;top:635px;width:1px;height:21px;background:#d4d4d4;"></div>
<div style="left:303px;top:635px;width:1px;height:21px;background:#d4d4d4;"></div>
<div style="left:384px;top:635px;width:1px;height:21px;background:#d4d4d4;"></div>
<div style="left:489px;top:635px;width:1px;height:21px;background:#d4d4d4;"></div>
<div style="left:588px;top:635px;width:1px;height:21px;background:#d4d4d4;"></div>
<div style="left:99px;top:635px;width:1px;height:21px;background:#d4d4d4;"></div>
<div style="left:25px;top:656px;width:35px;height:1px;background:linear-gradient(90deg, rgba(58,58,58,0) 0%, rgba(58,58,58,0.85) 55%, #3a3a3a 100%)"></div>
<span class="t g" style="left:39.18px;top:637px;font-size:13px;color:#f0f0f0;">5</span>
<span class="t" style="left:221.30px;top:640px;font-size:12.5px;color:#000000;-webkit-text-stroke:0.12px #000;">Task 4</span>
<span class="t" style="left:306.30px;top:640px;font-size:12.5px;color:#000000;-webkit-text-stroke:0.12px #000;">5 days</span>
<span class="t" style="left:387.30px;top:640px;font-size:12.5px;color:#000000;-webkit-text-stroke:0.12px #000;">04.03.19 8:00</span>
<div style="left:489px;top:634px;width:99px;height:22px;overflow:hidden">
<span class="t" style="left:2.30px;top:6px;font-size:12.5px;color:#000000;-webkit-text-stroke:0.12px #000;">08.03.19 17:00</span>
</div>
<span class="t" style="left:592.30px;top:640px;font-size:12.5px;color:#000000;-webkit-text-stroke:0.12px #000;">4</span>
<div style="left:61px;top:678px;width:590px;height:1px;background:#d4d4d4;"></div>
<div style="left:656px;top:678px;width:3px;height:1px;background:#d4d4d4;"></div>
<div style="left:156px;top:657px;width:1px;height:21px;background:#d4d4d4;"></div>
<div style="left:303px;top:657px;width:1px;height:21px;background:#d4d4d4;"></div>
<div style="left:384px;top:657px;width:1px;height:21px;background:#d4d4d4;"></div>
<div style="left:489px;top:657px;width:1px;height:21px;background:#d4d4d4;"></div>
<div style="left:588px;top:657px;width:1px;height:21px;background:#d4d4d4;"></div>
<div style="left:99px;top:657px;width:1px;height:21px;background:#d4d4d4;"></div>
<div style="left:25px;top:678px;width:35px;height:1px;background:linear-gradient(90deg, rgba(58,58,58,0) 0%, rgba(58,58,58,0.85) 55%, #3a3a3a 100%)"></div>
<span class="t g" style="left:39.18px;top:659px;font-size:13px;color:#f0f0f0;">6</span>
<span class="t" style="left:221.30px;top:662px;font-size:12.5px;color:#000000;letter-spacing:0.734px;-webkit-text-stroke:0.12px #000;">Milestone 1</span>
<span class="t" style="left:306.30px;top:662px;font-size:12.5px;color:#000000;-webkit-text-stroke:0.12px #000;">0 days</span>
<span class="t" style="left:387.30px;top:662px;font-size:12.5px;color:#000000;-webkit-text-stroke:0.12px #000;">08.03.19 17:00</span>
<div style="left:489px;top:656px;width:99px;height:22px;overflow:hidden">
<span class="t" style="left:2.30px;top:6px;font-size:12.5px;color:#000000;-webkit-text-stroke:0.12px #000;">08.03.19 17:00</span>
</div>
<span class="t" style="left:592.30px;top:662px;font-size:12.5px;color:#000000;-webkit-text-stroke:0.12px #000;">5</span>
<div style="left:61px;top:700px;width:590px;height:1px;background:#d4d4d4;"></div>
<div style="left:656px;top:700px;width:3px;height:1px;background:#d4d4d4;"></div>
<div style="left:156px;top:679px;width:1px;height:21px;background:#d4d4d4;"></div>
<div style="left:303px;top:679px;width:1px;height:21px;background:#d4d4d4;"></div>
<div style="left:384px;top:679px;width:1px;height:21px;background:#d4d4d4;"></div>
<div style="left:489px;top:679px;width:1px;height:21px;background:#d4d4d4;"></div>
<div style="left:588px;top:679px;width:1px;height:21px;background:#d4d4d4;"></div>
<div style="left:99px;top:679px;width:1px;height:21px;background:#d4d4d4;"></div>
<div style="left:25px;top:700px;width:35px;height:1px;background:linear-gradient(90deg, rgba(58,58,58,0) 0%, rgba(58,58,58,0.85) 55%, #3a3a3a 100%)"></div>
<span class="t g" style="left:39.18px;top:681px;font-size:13px;color:#f0f0f0;">7</span>
<span class="t" style="left:205.30px;top:684px;font-size:12.5px;color:#000000;font-weight:bold;">Summary 2</span>
<span class="t" style="left:306.30px;top:684px;font-size:12.5px;color:#000000;font-weight:bold;">14 days</span>
<span class="t" style="left:387.30px;top:684px;font-size:12.5px;color:#000000;font-weight:bold;">11.03.19 8:00</span>
<div style="left:489px;top:678px;width:99px;height:22px;overflow:hidden">
<span class="t" style="left:2.30px;top:6px;font-size:12.5px;color:#000000;font-weight:bold;">28.03.19 17:00</span>
</div>
</div>
<div style="left:59px;top:193px;width:42px;height:25px;background:transparent;border:2px solid #1e6e22;box-sizing:border-box;"></div>
<div style="left:651px;top:157px;width:1px;height:549px;background:#444444;"></div>
<div style="left:652px;top:157px;width:3px;height:549px;background:#5c5c5c;"></div>
<div style="left:655px;top:157px;width:1px;height:549px;background:#444444;"></div>
<div style="left:25px;top:689px;width:626px;height:17px;background:#ffffff;"></div>
<div style="left:27px;top:690px;width:624px;height:15px;background:#3a3a3a;"></div>
<div style="left:28px;top:691px;width:13px;height:13px;background:#9c9c9c;"></div>
<div style="left:43px;top:691px;width:358px;height:13px;background:#9c9c9c;"></div>
<div style="left:401px;top:691px;width:233px;height:13px;background:#585858;"></div>
<div style="left:634px;top:690px;width:2px;height:15px;background:#ffffff;"></div>
<div style="left:637px;top:691px;width:13px;height:13px;background:#9c9c9c;"></div>
<div style="left:656px;top:689px;width:3px;height:17px;background:#ffffff;"></div>
<div style="left:657px;top:690px;width:2px;height:15px;background:#3a3a3a;"></div>
<div style="left:0px;top:706px;width:659px;height:21px;background:#6a6a6a;"></div>
<div style="left:0px;top:706px;width:659px;height:1px;background:#585858;"></div>
<span class="t g" style="left:8.30px;top:711px;font-size:11.5px;color:#f0f0f0;letter-spacing:-0.548px;">Ready</span>
<span class="t g" style="left:89.50px;top:711px;font-size:11.5px;color:#f0f0f0;letter-spacing:-0.136px;">New Tasks : Auto Scheduled</span>
<svg style="position:absolute;left:0;top:0" width="659" height="727" viewBox="0 0 659 727"><defs><clipPath id="gc"><rect x="0" y="194" width="659" height="495"/></clipPath></defs><rect x="22" y="10" width="14.2" height="14" rx=".8" fill="#f2f2f2"/><path d="M24.2 11.3h9.6v4.2a1 1 0 0 1-1 1h-7.6a1 1 0 0 1-1-1z" fill="#444"/><rect x="25.2" y="19.2" width="7.6" height="3.6" fill="#444"/><rect x="27" y="20.8" width="2" height="2.2" fill="#f2f2f2"/><path d="M50.6 14l6.4-4.2v8.4z" fill="#f2f2f2"/><path d="M56 14H60a4.2 4.2 0 0 1 0 8.4h-1.2" fill="none" stroke="#f2f2f2" stroke-width="2.1"/><path d="M69.7 14.8h5.6l-2.8 3.2z" fill="#f2f2f2"/><path d="M100.6 14l-6.4-4.2v8.4z" fill="#7c7c7c"/><path d="M95.2 14H91.2a4.2 4.2 0 0 0 0 8.4h1.2" fill="none" stroke="#7c7c7c" stroke-width="2.1"/><path d="M104.6 14.8h5.6l-2.8 3.2z" fill="#7c7c7c"/><path d="M120.3 15.8a3.9 3.9 0 1 1 5.4 0" fill="none" stroke="#f2f2f2" stroke-width="2"/><path d="M121.6 13.3a1.4 1.4 0 0 1 2.8 0v4l3.6 1.1c1 .3 1.4 1 1.4 2v4.5h-6.8l-4.4-4.8 1-1 2.4 1.4z" fill="#f2f2f2"/><path d="M137.6 14.8h5.6l-2.8 3.2z" fill="#f2f2f2"/><path d="M158.5 13.7h5.5M158.5 15.6h5.5" stroke="#f2f2f2" stroke-width="1"/><path d="M158.5 17h5.5l-2.75 3z" fill="#f2f2f2"/><path d="M541.6 41.6a5.1 5.1 0 0 1 3.3 9c-.7.6-1 1.2-1 2v.3h-4.6v-.3c0-.8-.3-1.4-1-2a5.1 5.1 0 0 1 3.3-9z" fill="none" stroke="#f2f2f2" stroke-width="1.2"/><rect x="539.6" y="52.9" width="4" height="2.2" fill="none" stroke="#f2f2f2" stroke-width="1.1"/><path d="M540 56.6h3.2" stroke="#f2f2f2" stroke-width="1.2"/><path d="M13.5 96.5V72.5H41.5" fill="none" stroke="#444" stroke-width="1.3"/><rect x="14.2" y="73.2" width="27" height="24" fill="#fff"/><rect x="16.5" y="74.5" width="27.5" height="24" fill="#fff" stroke="#444" stroke-width="1.2"/><rect x="16" y="74" width="28.5" height="5" fill="#2e63a4"/><path d="M20.5 79v19" stroke="#444" stroke-width="1.2"/><path d="M17 83.5h3M17 88.5h3M17 93.5h3" stroke="#a9c1e0" stroke-width="1"/><path d="M25.5 79v19M30.5 79v19M35.5 79v19M40.5 79v19" stroke="#c3d5ea" stroke-width="1" stroke-dasharray="2 1"/><path d="M23.5 84.5V81.5H40.5V84.5" fill="none" stroke="#3a3a3a" stroke-width="1"/><rect x="23" y="85.5" width="11" height="3.2" rx=".6" fill="#2e63a4"/><rect x="30.5" y="91.3" width="10.3" height="3.4" rx=".6" fill="#2e63a4"/><path d="M41.0 127.3h5.8l-2.9 3.25z" fill="#444"/><path d="M56.5 96.5V72.5H84.5" fill="none" stroke="#444" stroke-width="1.3"/><rect x="57.2" y="73.2" width="27" height="24" fill="#fff"/><rect x="59.5" y="74.5" width="27.5" height="24" fill="#fff" stroke="#444" stroke-width="1.2"/><rect x="59" y="74" width="28.5" height="5" fill="#2e63a4"/><path d="M68.5 79v19" stroke="#444" stroke-width="1.2"/><path d="M60 83.5h8M60 88.5h8M60 93.5h8" stroke="#a9c1e0" stroke-width="1"/><rect x="69.5" y="79.8" width="17" height="2.4" fill="#c0d2e8"/><rect x="69.5" y="85.2" width="17" height="2.4" fill="#c0d2e8"/><rect x="69.5" y="91" width="4.5" height="2.4" fill="#c0d2e8"/><rect x="75" y="90.2" width="13" height="5.8" rx=".8" fill="#2e63a4"/><path d="M87.0 127.3h5.8l-2.9 3.25z" fill="#444"/><path d="M98.5 82.5V70.5H110.5" fill="none" stroke="#444" stroke-width="1"/><rect x="99" y="71" width="12" height="12" fill="#fff"/><rect x="100.5" y="72.5" width="12" height="12.5" fill="#fff" stroke="#444" stroke-width="1"/><rect x="100" y="72" width="13" height="3" fill="#2e63a4"/><rect x="102" y="76.5" width="3.6" height="2.2" fill="#fff" stroke="#333" stroke-width="1"/><rect x="107" y="80.2" width="3.6" height="2.2" fill="#fff" stroke="#333" stroke-width="1"/><path d="M103.5 79v2.3h3.5" fill="none" stroke="#333" stroke-width="1"/><path d="M98.5 105.5V93.5H110.5" fill="none" stroke="#444" stroke-width="1"/><rect x="99" y="94" width="12" height="12" fill="#fff"/><rect x="100.5" y="95.5" width="12" height="12.5" fill="#fff" stroke="#444" stroke-width="1"/><rect x="100" y="95" width="13" height="3" fill="#3a3a3a"/><path d="M101 99.5h12M101 103.5h12" stroke="#888" stroke-width="1" stroke-dasharray="2 1"/><path d="M104.5 98v9" stroke="#888" stroke-width="1"/><rect x="106" y="100" width="7" height="2" fill="#2e63a4"/><rect x="101" y="104" width="9" height="2" fill="#2e63a4"/><rect x="99.5" y="118.5" width="9.5" height="7.5" fill="#fff" stroke="#444" stroke-width="1"/><rect x="99" y="116.2" width="10.5" height="3.3" fill="#2e63a4"/><rect x="103.5" y="123.5" width="9.5" height="7" fill="#fff" stroke="#444" stroke-width="1"/><rect x="103" y="121.8" width="10.5" height="3.2" fill="#2e63a4"/><rect x="99" y="128" width="7" height="3" fill="#2e63a4"/><path d="M107 127.5h5" stroke="#aac" stroke-width="1" stroke-dasharray="1 1"/><path d="M219.5 77.8h5.8l-2.9 3.25z" fill="#444"/><path d="M173.5 100.8h5.8l-2.9 3.25z" fill="#444"/><path d="M183.0 123.8h5.8l-2.9 3.25z" fill="#444"/><path d="M256.5 96.5V72.5H284.5" fill="none" stroke="#444" stroke-width="1.3"/><rect x="257.2" y="73.2" width="27" height="24" fill="#fff"/><rect x="259.5" y="74.5" width="27.5" height="24" fill="#fff" stroke="#444" stroke-width="1.2"/><rect x="259" y="74" width="28.5" height="5" fill="#2e63a4"/><path d="M263.5 79v19" stroke="#444" stroke-width="1.2"/><path d="M260 82h3M260 86h3M260 90h3M260 94h3" stroke="#a9c1e0" stroke-width="1"/><path d="M268.5 79v19M273.5 79v19M278.5 79v19M283.5 79v19" stroke="#c3d5ea" stroke-width="1"/><rect x="264" y="81" width="4" height="2" fill="#7b3f9e"/><rect x="269" y="81" width="4" height="2" fill="#333"/><rect x="274" y="81" width="4" height="2" fill="#2e63a4"/><rect x="264" y="85" width="4" height="2" fill="#2e63a4"/><rect x="269" y="85" width="4" height="2" fill="#7b3f9e"/><rect x="274" y="85" width="2" height="2" fill="#7b3f9e"/><rect x="264" y="89" width="4" height="2" fill="#2e63a4"/><rect x="269" y="89" width="4" height="2" fill="#2e63a4"/><rect x="274" y="89" width="2" height="2" fill="#2e63a4"/><rect x="269" y="93" width="4" height="2" fill="#2e63a4"/><rect x="269" y="95" width="4" height="3" fill="#7b3f9e"/><rect x="264" y="96" width="4" height="2" fill="#2e63a4"/><circle cx="281" cy="88.3" r="4.2" fill="#2e63a4"/><path d="M274.2 101.5c-.2-3.5 .8-6.5 3.8-7.2l3 2.6 3-2.6c3 .7 4 3.7 3.8 7.2z" fill="#2e63a4"/><path d="M291.5 127.3h5.8l-2.9 3.25z" fill="#444"/><path d="M302.5 82.5V70.5H314.5" fill="none" stroke="#444" stroke-width="1"/><rect x="303" y="71" width="12" height="12" fill="#fff"/><rect x="304.5" y="72.5" width="12" height="12.5" fill="#fff" stroke="#444" stroke-width="1"/><rect x="304" y="72" width="13" height="3" fill="#2e63a4"/><path d="M305 76.5h5M305 79.5h5M305 82.5h4" stroke="#a9c1e0" stroke-width="1"/><circle cx="313.8" cy="78.4" r="2.5" fill="#2e63a4"/><path d="M310 85.8V83.88A4.10 2.88 0 0 1 318.2 83.88V85.8z" fill="#2e63a4"/><path d="M313.00 80.80h2.2v1.3h-2.2z" fill="#fff"/><path d="M302.5 105.5V93.5H314.5" fill="none" stroke="#444" stroke-width="1"/><rect x="303" y="94" width="12" height="12" fill="#fff"/><rect x="304.5" y="95.5" width="12" height="12.5" fill="#fff" stroke="#444" stroke-width="1"/><rect x="304" y="95" width="13" height="3" fill="#2e63a4"/><rect x="306" y="99" width="1.2" height="1.2" fill="#444"/><rect x="310" y="99" width="1.2" height="1.2" fill="#444"/><rect x="306" y="102" width="1.2" height="1.2" fill="#444"/><rect x="306" y="105" width="1.2" height="1.2" fill="#444"/><circle cx="315" cy="100.7" r="2.1" fill="#4e9a6e"/><path d="M312.2 107V105.48A2.90 2.28 0 0 1 318 105.48V107z" fill="#4e9a6e"/><path d="M314.00 103.00h2.2v1.3h-2.2z" fill="#fff"/><circle cx="310" cy="102.7" r="2.1" fill="#2e63a4"/><path d="M307 108.8V107.24A3.00 2.34 0 0 1 313 107.24V108.8z" fill="#2e63a4"/><path d="M308.90 104.70h2.2v1.3h-2.2z" fill="#fff"/><path d="M303.5 118.5V124.5H307M312.5 118.5v3" fill="none" stroke="#444" stroke-width="1"/><rect x="304" y="118.7" width="8" height="5.3" fill="#fff"/><path d="M305 120.5h6M305 122.5h2" stroke="#a9c1e0" stroke-width="1"/><rect x="303" y="116" width="10" height="2.7" fill="#2e63a4"/><path d="M307.5 122.5V130.5H310" fill="none" stroke="#444" stroke-width="1"/><rect x="308" y="124" width="3" height="6" fill="#fff"/><rect x="307" y="122.2" width="4" height="1.9" fill="#2e63a4"/><circle cx="314" cy="124.2" r="2.9" fill="#2e63a4"/><path d="M310 131.8V129.84A4.00 2.94 0 0 1 318 129.84V131.8z" fill="#2e63a4"/><path d="M312.90 126.70h2.2v1.3h-2.2z" fill="#fff"/><path d="M413.5 77.8h5.8l-2.9 3.25z" fill="#444"/><path d="M410.5 100.8h5.8l-2.9 3.25z" fill="#444"/><path d="M386.5 123.8h5.8l-2.9 3.25z" fill="#444"/><path d="M451.5 84.5l4.6-12.2h1.2l4.6 12.2M453.3 80.2h7" fill="none" stroke="#2e63a4" stroke-width="1.9"/><path d="M452.3 88h9l-9 10.5h9.6" fill="none" stroke="#7b3f9e" stroke-width="1.9"/><path d="M470 72v26.5" stroke="#505050" stroke-width="1.5"/><path d="M465.3 93.5l4.7 5.3 4.7-5.3" fill="none" stroke="#505050" stroke-width="1.5"/><path d="M458.0 127.3h5.8l-2.9 3.25z" fill="#444"/><rect x="490.5" y="72.5" width="15" height="15" fill="#fff" stroke="#444" stroke-width="1"/><path d="M493 80h10M498 74.8v9.6" stroke="#2e63a4" stroke-width="2"/><rect x="501.5" y="83.5" width="15" height="15" fill="#fff" stroke="#444" stroke-width="1"/><path d="M504.5 91h9" stroke="#2e63a4" stroke-width="2"/><path d="M500.0 127.3h5.8l-2.9 3.25z" fill="#444"/><rect x="541.5" y="85.5" width="20" height="16" fill="#fff" stroke="#555" stroke-width="1.1"/><path d="M546.5 85.5v16" stroke="#8a8a8a" stroke-width="1"/><path d="M551.5 85.5v16" stroke="#8a8a8a" stroke-width="1"/><path d="M556.5 85.5v16" stroke="#8a8a8a" stroke-width="1"/><path d="M541.5 89.5h20" stroke="#8a8a8a" stroke-width="1"/><path d="M541.5 93.5h20" stroke="#8a8a8a" stroke-width="1"/><path d="M541.5 97.5h20" stroke="#8a8a8a" stroke-width="1"/><rect x="532.5" y="79.5" width="20" height="16" fill="#fff" stroke="#555" stroke-width="1.1"/><path d="M537.5 79.5v16" stroke="#8a8a8a" stroke-width="1"/><path d="M542.5 79.5v16" stroke="#8a8a8a" stroke-width="1"/><path d="M547.5 79.5v16" stroke="#8a8a8a" stroke-width="1"/><path d="M532.5 83.5h20" stroke="#8a8a8a" stroke-width="1"/><path d="M532.5 87.5h20" stroke="#8a8a8a" stroke-width="1"/><path d="M532.5 91.5h20" stroke="#8a8a8a" stroke-width="1"/><path d="M549 73.6C552.5 72.8 556.5 74 558 78.5L558.2 82.5" fill="none" stroke="#2e63a4" stroke-width="2"/><path d="M552.3 70.2L547.6 73.7L552 77.3" fill="none" stroke="#2e63a4" stroke-width="2"/><path d="M554.6 79.8L558.2 83.6L561.8 79.6" fill="none" stroke="#2e63a4" stroke-width="2"/><path d="M542.0 127.3h5.8l-2.9 3.25z" fill="#444"/><path d="M574.5 76.5A6.8 4.7 0 1 0 583.5 76.2" fill="none" stroke="#c8553d" stroke-width="1.3"/><path d="M572.6 84.2L585 72.2" stroke="#e8b85a" stroke-width="2.6" stroke-linecap="round"/><path d="M570.8 94h15.4v2.8l-5.8 4.6v6.5h-3.2v-6.5l-6.4-4.6z" fill="#3a3a3a"/><rect x="573.5" y="118.5" width="8" height="8.5" fill="#fff" stroke="#333" stroke-width="1"/><path d="M575.2 122.7h4.6M577.5 120.4v4.6" stroke="#333" stroke-width="1"/><rect x="583" y="118" width="4" height="5.8" fill="#e8b870"/><path d="M583.5 120.8h3.5" stroke="#444" stroke-width="1"/><rect x="574" y="127.5" width="13" height="5" fill="#fff"/><rect x="574" y="128" width="6" height="4.5" fill="#e8b870"/><path d="M584 126.5h3" stroke="#444" stroke-width="1"/><circle cx="80" cy="179" r="8" fill="#4a7ebb"/><circle cx="80" cy="175.4" r="1.5" fill="#fff"/><rect x="78.7" y="178.3" width="2.6" height="6.8" fill="#fff"/><path d="M143 183h7.2l-3.6 4z" fill="#f2f2f2"/><path d="M289.8 183h7.2l-3.6 4z" fill="#f2f2f2"/><path d="M371 183h7.2l-3.6 4z" fill="#f2f2f2"/><path d="M476 183h7.2l-3.6 4z" fill="#f2f2f2"/><path d="M575 183h7.2l-3.6 4z" fill="#f2f2f2"/><path d="M36.2 693.6v7.2l-4.2-3.6z" fill="#1e1e1e"/><path d="M642 694v7l4.2-3.5z" fill="#1e1e1e"/><path d="M72 710h12v4.3h-5v1.5h-7z" fill="#e6e6e6"/><rect x="76" y="718.1" width="7" height="2" fill="#e6e6e6"/><path d="M80 715.2h2.3l3.8 3.9-3.8 3.9H80l3.6-3.9z" fill="#e6e6e6"/><g clip-path="url(#gc)"><path d="M104.2 200h11.8a1 1 0 0 1 1 1v3h-4.2l-1.6 2.7h-6.6a1 1 0 0 1-1-1V201a1 1 0 0 1 1-1z" fill="#4a7ebb"/><path d="M112.3 208.2h5" stroke="#6a6a6a" stroke-width="1.8"/><path d="M115.2 205.4l2.8 2.8-2.8 2.8" fill="none" stroke="#6a6a6a" stroke-width="1.8"/><path d="M166.5 202.6v5h-5z" fill="#666" stroke="#1a1a1a" stroke-width="1.1" stroke-linejoin="round"/><path d="M66.7 233.5V218.9h8.8l3.3 3.3V233.5z" fill="#fff" stroke="#111" stroke-width="1.1" stroke-linejoin="round"/><path d="M73.5 219v4.5M71 223.5h5.5v8.3H71" fill="none" stroke="#9a9a9a" stroke-width="1"/><rect x="71" y="225.3" width="3.7" height="1.4" fill="#7cc28a"/><rect x="72" y="228.2" width="4" height="1.6" fill="#7cc28a"/><path d="M63.1 221.1L69.8 220.6V232.2L63.1 231.7z" fill="#217a35"/><path d="M65.6 229.2V224.2h1.6a1.4 1.4 0 0 1 0 2.8h-1.6" fill="none" stroke="#fff" stroke-width="1.2"/><path d="M104.2 222h11.8a1 1 0 0 1 1 1v3h-4.2l-1.6 2.7h-6.6a1 1 0 0 1-1-1V223a1 1 0 0 1 1-1z" fill="#4a7ebb"/><path d="M112.3 230.2h5" stroke="#6a6a6a" stroke-width="1.8"/><path d="M115.2 227.4l2.8 2.8-2.8 2.8" fill="none" stroke="#6a6a6a" stroke-width="1.8"/><path d="M182.5 224.6v5h-5z" fill="#666" stroke="#1a1a1a" stroke-width="1.1" stroke-linejoin="round"/><path d="M104.2 244h11.8a1 1 0 0 1 1 1v3h-4.2l-1.6 2.7h-6.6a1 1 0 0 1-1-1V245a1 1 0 0 1 1-1z" fill="#4a7ebb"/><path d="M112.3 252.2h5" stroke="#6a6a6a" stroke-width="1.8"/><path d="M115.2 249.4l2.8 2.8-2.8 2.8" fill="none" stroke="#6a6a6a" stroke-width="1.8"/><path d="M198.5 246.6v5h-5z" fill="#666" stroke="#1a1a1a" stroke-width="1.1" stroke-linejoin="round"/><circle cx="71" cy="264.5" r="1.8" fill="#ff0000"/><path d="M67.5 266.5h7v6.5h-1.8v5h-3.4v-5h-1.8z" fill="#ff0000"/><path d="M104.2 266h11.8a1 1 0 0 1 1 1v3h-4.2l-1.6 2.7h-6.6a1 1 0 0 1-1-1V267a1 1 0 0 1 1-1z" fill="#4a7ebb"/><path d="M112.3 274.2h5" stroke="#6a6a6a" stroke-width="1.8"/><path d="M115.2 271.4l2.8 2.8-2.8 2.8" fill="none" stroke="#6a6a6a" stroke-width="1.8"/><path d="M104.2 288h11.8a1 1 0 0 1 1 1v3h-4.2l-1.6 2.7h-6.6a1 1 0 0 1-1-1V289a1 1 0 0 1 1-1z" fill="#4a7ebb"/><path d="M112.3 296.2h5" stroke="#6a6a6a" stroke-width="1.8"/><path d="M115.2 293.4l2.8 2.8-2.8 2.8" fill="none" stroke="#6a6a6a" stroke-width="1.8"/><path d="M104.2 310h11.8a1 1 0 0 1 1 1v3h-4.2l-1.6 2.7h-6.6a1 1 0 0 1-1-1V311a1 1 0 0 1 1-1z" fill="#4a7ebb"/><path d="M112.3 318.2h5" stroke="#6a6a6a" stroke-width="1.8"/><path d="M115.2 315.4l2.8 2.8-2.8 2.8" fill="none" stroke="#6a6a6a" stroke-width="1.8"/><path d="M104.2 332h11.8a1 1 0 0 1 1 1v3h-4.2l-1.6 2.7h-6.6a1 1 0 0 1-1-1V333a1 1 0 0 1 1-1z" fill="#4a7ebb"/><path d="M112.3 340.2h5" stroke="#6a6a6a" stroke-width="1.8"/><path d="M115.2 337.4l2.8 2.8-2.8 2.8" fill="none" stroke="#6a6a6a" stroke-width="1.8"/><path d="M104.2 354h11.8a1 1 0 0 1 1 1v3h-4.2l-1.6 2.7h-6.6a1 1 0 0 1-1-1V355a1 1 0 0 1 1-1z" fill="#4a7ebb"/><path d="M112.3 362.2h5" stroke="#6a6a6a" stroke-width="1.8"/><path d="M115.2 359.4l2.8 2.8-2.8 2.8" fill="none" stroke="#6a6a6a" stroke-width="1.8"/><path d="M104.2 376h11.8a1 1 0 0 1 1 1v3h-4.2l-1.6 2.7h-6.6a1 1 0 0 1-1-1V377a1 1 0 0 1 1-1z" fill="#4a7ebb"/><path d="M112.3 384.2h5" stroke="#6a6a6a" stroke-width="1.8"/><path d="M115.2 381.4l2.8 2.8-2.8 2.8" fill="none" stroke="#6a6a6a" stroke-width="1.8"/><path d="M198.5 378.6v5h-5z" fill="#666" stroke="#1a1a1a" stroke-width="1.1" stroke-linejoin="round"/><path d="M104.2 398h11.8a1 1 0 0 1 1 1v3h-4.2l-1.6 2.7h-6.6a1 1 0 0 1-1-1V399a1 1 0 0 1 1-1z" fill="#4a7ebb"/><path d="M112.3 406.2h5" stroke="#6a6a6a" stroke-width="1.8"/><path d="M115.2 403.4l2.8 2.8-2.8 2.8" fill="none" stroke="#6a6a6a" stroke-width="1.8"/><path d="M104.2 420h11.8a1 1 0 0 1 1 1v3h-4.2l-1.6 2.7h-6.6a1 1 0 0 1-1-1V421a1 1 0 0 1 1-1z" fill="#4a7ebb"/><path d="M112.3 428.2h5" stroke="#6a6a6a" stroke-width="1.8"/><path d="M115.2 425.4l2.8 2.8-2.8 2.8" fill="none" stroke="#6a6a6a" stroke-width="1.8"/><path d="M104.2 442h11.8a1 1 0 0 1 1 1v3h-4.2l-1.6 2.7h-6.6a1 1 0 0 1-1-1V443a1 1 0 0 1 1-1z" fill="#4a7ebb"/><path d="M112.3 450.2h5" stroke="#6a6a6a" stroke-width="1.8"/><path d="M115.2 447.4l2.8 2.8-2.8 2.8" fill="none" stroke="#6a6a6a" stroke-width="1.8"/><path d="M104.2 464h11.8a1 1 0 0 1 1 1v3h-4.2l-1.6 2.7h-6.6a1 1 0 0 1-1-1V465a1 1 0 0 1 1-1z" fill="#4a7ebb"/><path d="M112.3 472.2h5" stroke="#6a6a6a" stroke-width="1.8"/><path d="M115.2 469.4l2.8 2.8-2.8 2.8" fill="none" stroke="#6a6a6a" stroke-width="1.8"/><path d="M104.2 486h11.8a1 1 0 0 1 1 1v3h-4.2l-1.6 2.7h-6.6a1 1 0 0 1-1-1V487a1 1 0 0 1 1-1z" fill="#4a7ebb"/><path d="M112.3 494.2h5" stroke="#6a6a6a" stroke-width="1.8"/><path d="M115.2 491.4l2.8 2.8-2.8 2.8" fill="none" stroke="#6a6a6a" stroke-width="1.8"/><path d="M104.2 508h11.8a1 1 0 0 1 1 1v3h-4.2l-1.6 2.7h-6.6a1 1 0 0 1-1-1V509a1 1 0 0 1 1-1z" fill="#4a7ebb"/><path d="M112.3 516.2h5" stroke="#6a6a6a" stroke-width="1.8"/><path d="M115.2 513.4l2.8 2.8-2.8 2.8" fill="none" stroke="#6a6a6a" stroke-width="1.8"/><path d="M66.7 541.5V526.9h8.8l3.3 3.3V541.5z" fill="#fff" stroke="#111" stroke-width="1.1" stroke-linejoin="round"/><path d="M73.5 527v4.5M71 531.5h5.5v8.3H71" fill="none" stroke="#9a9a9a" stroke-width="1"/><rect x="71" y="533.3" width="3.7" height="1.4" fill="#7cc28a"/><rect x="72" y="536.2" width="4" height="1.6" fill="#7cc28a"/><path d="M63.1 529.1L69.8 528.6V540.2L63.1 539.7z" fill="#217a35"/><path d="M65.6 537.2V532.2h1.6a1.4 1.4 0 0 1 0 2.8h-1.6" fill="none" stroke="#fff" stroke-width="1.2"/><path d="M104.2 530h11.8a1 1 0 0 1 1 1v3h-4.2l-1.6 2.7h-6.6a1 1 0 0 1-1-1V531a1 1 0 0 1 1-1z" fill="#4a7ebb"/><path d="M112.3 538.2h5" stroke="#6a6a6a" stroke-width="1.8"/><path d="M115.2 535.4l2.8 2.8-2.8 2.8" fill="none" stroke="#6a6a6a" stroke-width="1.8"/><path d="M182.5 532.6v5h-5z" fill="#666" stroke="#1a1a1a" stroke-width="1.1" stroke-linejoin="round"/><path d="M104.2 552h11.8a1 1 0 0 1 1 1v3h-4.2l-1.6 2.7h-6.6a1 1 0 0 1-1-1V553a1 1 0 0 1 1-1z" fill="#4a7ebb"/><path d="M112.3 560.2h5" stroke="#6a6a6a" stroke-width="1.8"/><path d="M115.2 557.4l2.8 2.8-2.8 2.8" fill="none" stroke="#6a6a6a" stroke-width="1.8"/><path d="M198.5 554.6v5h-5z" fill="#666" stroke="#1a1a1a" stroke-width="1.1" stroke-linejoin="round"/><circle cx="71" cy="572.5" r="1.8" fill="#ff0000"/><path d="M67.5 574.5h7v6.5h-1.8v5h-3.4v-5h-1.8z" fill="#ff0000"/><path d="M104.2 574h11.8a1 1 0 0 1 1 1v3h-4.2l-1.6 2.7h-6.6a1 1 0 0 1-1-1V575a1 1 0 0 1 1-1z" fill="#4a7ebb"/><path d="M112.3 582.2h5" stroke="#6a6a6a" stroke-width="1.8"/><path d="M115.2 579.4l2.8 2.8-2.8 2.8" fill="none" stroke="#6a6a6a" stroke-width="1.8"/><path d="M104.2 596h11.8a1 1 0 0 1 1 1v3h-4.2l-1.6 2.7h-6.6a1 1 0 0 1-1-1V597a1 1 0 0 1 1-1z" fill="#4a7ebb"/><path d="M112.3 604.2h5" stroke="#6a6a6a" stroke-width="1.8"/><path d="M115.2 601.4l2.8 2.8-2.8 2.8" fill="none" stroke="#6a6a6a" stroke-width="1.8"/><path d="M104.2 618h11.8a1 1 0 0 1 1 1v3h-4.2l-1.6 2.7h-6.6a1 1 0 0 1-1-1V619a1 1 0 0 1 1-1z" fill="#4a7ebb"/><path d="M112.3 626.2h5" stroke="#6a6a6a" stroke-width="1.8"/><path d="M115.2 623.4l2.8 2.8-2.8 2.8" fill="none" stroke="#6a6a6a" stroke-width="1.8"/><path d="M104.2 640h11.8a1 1 0 0 1 1 1v3h-4.2l-1.6 2.7h-6.6a1 1 0 0 1-1-1V641a1 1 0 0 1 1-1z" fill="#4a7ebb"/><path d="M112.3 648.2h5" stroke="#6a6a6a" stroke-width="1.8"/><path d="M115.2 645.4l2.8 2.8-2.8 2.8" fill="none" stroke="#6a6a6a" stroke-width="1.8"/><path d="M104.2 662h11.8a1 1 0 0 1 1 1v3h-4.2l-1.6 2.7h-6.6a1 1 0 0 1-1-1V663a1 1 0 0 1 1-1z" fill="#4a7ebb"/><path d="M112.3 670.2h5" stroke="#6a6a6a" stroke-width="1.8"/><path d="M115.2 667.4l2.8 2.8-2.8 2.8" fill="none" stroke="#6a6a6a" stroke-width="1.8"/><path d="M104.2 684h11.8a1 1 0 0 1 1 1v3h-4.2l-1.6 2.7h-6.6a1 1 0 0 1-1-1V685a1 1 0 0 1 1-1z" fill="#4a7ebb"/><path d="M112.3 692.2h5" stroke="#6a6a6a" stroke-width="1.8"/><path d="M115.2 689.4l2.8 2.8-2.8 2.8" fill="none" stroke="#6a6a6a" stroke-width="1.8"/><path d="M198.5 686.6v5h-5z" fill="#666" stroke="#1a1a1a" stroke-width="1.1" stroke-linejoin="round"/></g></svg>
</body></html>
